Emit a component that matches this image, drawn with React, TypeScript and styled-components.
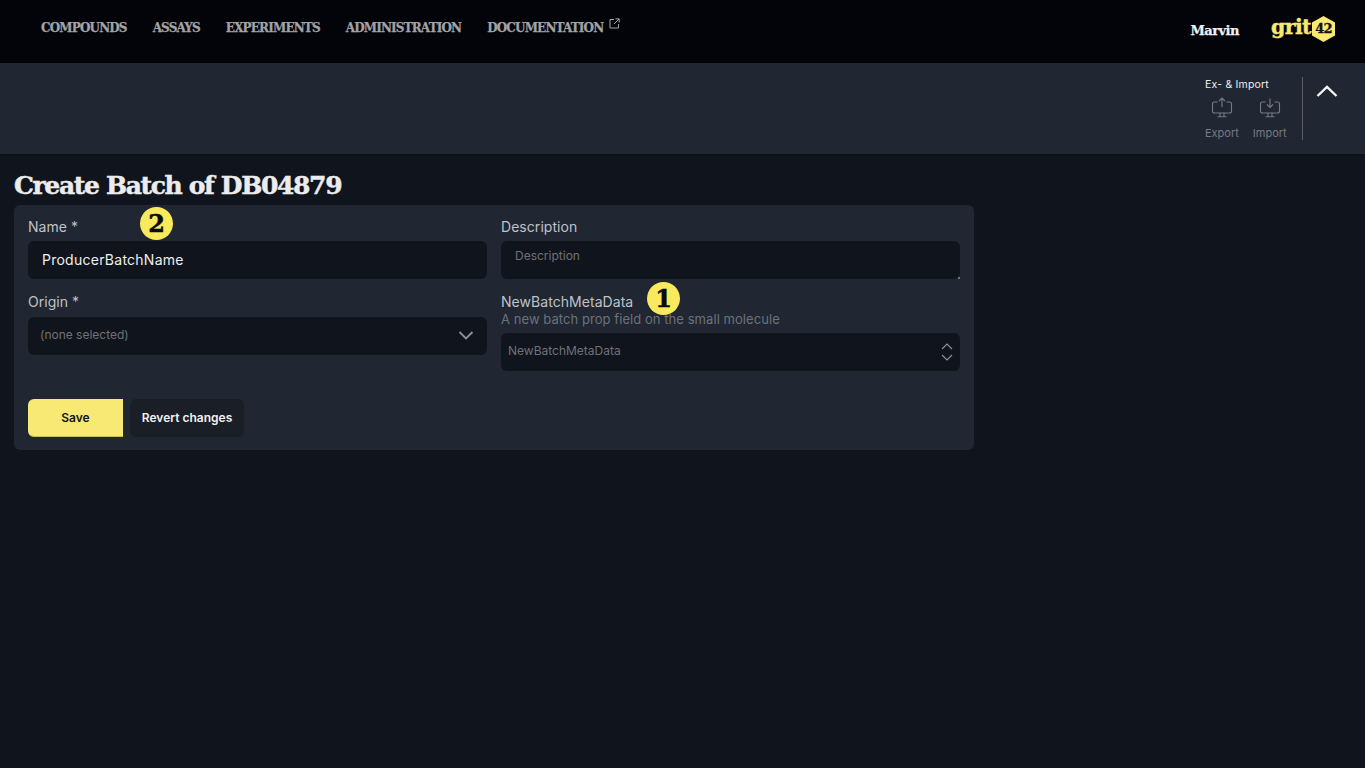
import React from "react";
import styled, { createGlobalStyle } from "styled-components";

const GlobalStyle = createGlobalStyle`
  html, body { margin: 0; padding: 0; background: #10141c; }
  body { font-family: "Inter", "Liberation Sans", sans-serif; }
  * { box-sizing: border-box; }
`;

const slab = `"DejaVu Serif", "Liberation Serif", serif`;

const Page = styled.div`
  min-height: 768px;
  background: #10141c;
`;

const TopBar = styled.header`
  height: 63px;
  background: #03040a;
  display: flex;
  align-items: center;
  justify-content: space-between;
  padding: 0 30px 8px 41px;
`;

const Nav = styled.nav`
  display: flex;
  gap: 26px;
  align-items: center;
`;

const NavItem = styled.a`
  position: relative;
  font-family: ${slab};
  font-weight: 700;
  font-size: 12px;
  letter-spacing: -0.85px;
  -webkit-text-stroke: 0.25px #a2a3a6;
  color: #a2a3a6;
  display: flex;
  align-items: flex-start;
  gap: 6px;
  svg { margin-top: -3px; }
`;

const UserArea = styled.div`
  display: flex;
  align-items: center;
  gap: 32px;
  margin-top: 6px;
`;

const UserName = styled.span`
  font-family: ${slab};
  font-weight: 700;
  font-size: 13px;
  letter-spacing: -0.5px;
  -webkit-text-stroke: 0.25px #f1f1f1;
  color: #f1f1f1;
`;

const Logo = styled.div`
  display: flex;
  align-items: center;
  gap: 1px;
  margin-top: -4px;
`;

const LogoWord = styled.span`
  font-family: ${slab};
  font-weight: 700;
  font-size: 20.5px;
  letter-spacing: -0.6px;
  -webkit-text-stroke: 0.4px #f8e971;
  color: #f8e971;
  line-height: 1;
  margin-top: -3px;
`;

const LogoHex = styled.div`
  position: relative;
  width: 23px;
  height: 26px;
  display: flex;
  align-items: center;
  justify-content: center;
  svg { position: absolute; inset: 0; }
`;

const LogoNum = styled.span`
  position: relative;
  font-family: ${slab};
  font-weight: 700;
  font-size: 13px;
  letter-spacing: -0.9px;
  -webkit-text-stroke: 0.3px #111;
  color: #111;
`;

const SubBar = styled.section`
  height: 91px;
  background: #202632;
  display: flex;
  justify-content: flex-end;
  padding: 14px 0;
  box-shadow: 0 1px 2px rgba(0, 0, 0, 0.25);
`;

const ToolGroup = styled.div`
  width: 98px;
  height: 63px;
  border-right: 1px solid #5a5e67;
  margin-right: 62px;
`;

const GroupTitle = styled.div`
  font-size: 10.5px;
  line-height: 15px;
  letter-spacing: 0.2px;
  color: #f0f0f0;
`;

const ToolRow = styled.div`
  display: flex;
  gap: 14px;
  margin-top: 4px;
`;

const ToolButton = styled.div`
  display: flex;
  flex-direction: column;
  align-items: center;
  gap: 8px;
  font-size: 11px;
  line-height: 14px;
  color: #777b83;
`;

const Collapse = styled.div`
  position: relative;
  svg { position: absolute; right: 27px; top: 7px; }
`;

const Main = styled.main`
  padding: 17px 14px 0;
`;

const Title = styled.h1`
  margin: 0;
  font-family: ${slab};
  font-weight: 700;
  font-size: 25px;
  line-height: 30px;
  letter-spacing: -1.35px;
  -webkit-text-stroke: 0.5px #ececec;
  color: #ececec;
`;

const Card = styled.form`
  width: 960px;
  height: 245px;
  margin-top: 4px;
  padding: 14px;
  background: #202632;
  border-radius: 6px;
`;

const Grid = styled.div`
  display: grid;
  grid-template-columns: 459px 459px;
  grid-template-rows: 75px 77px;
  column-gap: 14px;
`;

const Field = styled.div``;

const Label = styled.label<{ $height?: number }>`
  position: relative;
  display: block;
  height: ${(p) => p.$height ?? 22}px;
  font-size: 14px;
  line-height: 16px;
  letter-spacing: 0.05px;
  color: #bfc2c8;
`;

const Help = styled.div`
  font-size: 13px;
  line-height: 14px;
  letter-spacing: 0.06px;
  color: #6d717a;
  margin-top: -5px;
  margin-bottom: 7px;
`;

const Control = styled.div<{ $pad: number }>`
  height: 38px;
  background: #10141c;
  border-radius: 6px;
  padding: 0 ${(p) => p.$pad}px;
  display: flex;
  align-items: center;
  justify-content: space-between;
`;

const TextAreaWrap = styled.div`
  position: relative;
  height: 38px;
  &::after {
    content: "";
    position: absolute;
    right: 0;
    bottom: 0;
    width: 3px;
    height: 3px;
    background: linear-gradient(135deg, transparent 50%, #6d717a 50%);
  }
`;

const TextArea = styled.textarea`
  display: block;
  width: 100%;
  height: 38px;
  padding: 7px 14px;
  border: 0;
  outline: 0;
  resize: none;
  background: #10141c;
  border-radius: 6px;
  font: 12px / 15px "Inter", sans-serif;
  color: #eeeeee;
  &::placeholder { color: #6f7278; }
`;

const Value = styled.span`
  font-size: 14px;
  letter-spacing: 0.25px;
  margin-top: -1px;
  color: #eeeeee;
`;

const Placeholder = styled.span`
  font-size: 12px;
  margin-top: -3px;
  color: #6f7278;
`;

const Actions = styled.div`
  display: flex;
  gap: 7px;
  margin-top: 28px;
`;

const PrimaryButton = styled.button`
  width: 95px;
  height: 38px;
  border: 0;
  border-bottom: 1px solid #c9bd57;
  border-radius: 6px 0 0 6px;
  background: #f7e973;
  font: 600 12px "Inter", sans-serif;
  color: #14161b;
`;

const GhostButton = styled.button`
  width: 114px;
  height: 38px;
  border: 0;
  padding-bottom: 2px;
  border-radius: 6px;
  background: #191e27;
  font: 600 12px "Inter", sans-serif;
  color: #f1f1f1;
`;

const Marker = styled.span<{ $left: number; $top: number }>`
  position: absolute;
  left: ${(p) => p.$left}px;
  top: ${(p) => p.$top}px;
  width: 33px;
  height: 33px;
  border-radius: 50%;
  background: #f9e95c;
  color: #0a0a0a;
  font-family: ${slab};
  font-weight: 700;
  font-size: 24px;
  line-height: 33px;
  letter-spacing: 0;
  -webkit-text-stroke: 0.5px #0a0a0a;
  text-align: center;
`;

const ExternalIcon = () => (
  <svg width="11" height="11" viewBox="0 0 11 11" fill="none" stroke="#a2a3a6" strokeWidth="1">
    <path d="M5 1.5H1v8.5h8.5V6M6.5 .8h3.7v3.7M10 1 5 6" />
  </svg>
);

const MonitorIcon = ({ down }: { down?: boolean }) => (
  <svg width="22" height="22" viewBox="0 0 22 22" fill="none" stroke="#777b83" strokeWidth="1.1">
    <path d="M6.5 6H3.5a2 2 0 0 0-2 2v7a2 2 0 0 0 2 2h15a2 2 0 0 0 2-2V8a2 2 0 0 0-2-2H15.5" />
    <path d="M9 17v3.5M13 17v3.5M6.5 20.8h9" />
    {down ? <path d="M11 2.5v8.5M8 8.5l3 3 3-3" /> : <path d="M11 11V2.5M8 5l3-3 3 3" />}
  </svg>
);

export default function App() {
  return (
    <Page>
      <GlobalStyle />
      <TopBar>
        <Nav>
          <NavItem>COMPOUNDS</NavItem>
          <NavItem>ASSAYS</NavItem>
          <NavItem>EXPERIMENTS</NavItem>
          <NavItem>ADMINISTRATION</NavItem>
          <NavItem>
            DOCUMENTATION <ExternalIcon />
          </NavItem>
        </Nav>
        <UserArea>
          <UserName>Marvin</UserName>
          <Logo>
            <LogoWord>grit</LogoWord>
            <LogoHex>
              <svg width="23" height="26" viewBox="0 0 23 26">
                <path d="M11.5 0 23 6.5v13L11.5 26 0 19.5v-13z" fill="#f8e971" />
              </svg>
              <LogoNum>42</LogoNum>
            </LogoHex>
          </Logo>
        </UserArea>
      </TopBar>
      <SubBar>
        <ToolGroup>
          <GroupTitle>Ex- &amp; Import</GroupTitle>
          <ToolRow>
            <ToolButton>
              <MonitorIcon />
              Export
            </ToolButton>
            <ToolButton>
              <MonitorIcon down />
              Import
            </ToolButton>
          </ToolRow>
        </ToolGroup>
        <Collapse>
          <svg width="22" height="14" viewBox="0 0 22 14" fill="none" stroke="#f4f4f4" strokeWidth="2.4">
            <path d="M1.5 12 11 3l9.5 9" />
          </svg>
        </Collapse>
      </SubBar>
      <Main>
        <Title>Create Batch of DB04879</Title>
        <Card>
          <Grid>
            <Field>
              <Label>
                Name *
                <Marker $left={112} $top={-12}>2</Marker>
              </Label>
              <Control $pad={14}>
                <Value>ProducerBatchName</Value>
              </Control>
            </Field>
            <Field>
              <Label>Description</Label>
              <TextAreaWrap>
                <TextArea placeholder="Description" />
              </TextAreaWrap>
            </Field>
            <Field>
              <Label $height={23}>Origin *</Label>
              <Control $pad={12}>
                <Placeholder>(none selected)</Placeholder>
                <svg width="16" height="10" viewBox="0 0 16 10" fill="none" stroke="#8f9298" strokeWidth="1.8" style={{ marginRight: 1 }}>
                  <path d="M1.5 1 8 7.5 14.5 1" />
                </svg>
              </Control>
            </Field>
            <Field>
              <Label $height={23}>
                NewBatchMetaData
                <Marker $left={146} $top={-12}>1</Marker>
              </Label>
              <Help>A new batch prop field on the small molecule</Help>
              <Control $pad={7}>
                <Placeholder>NewBatchMetaData</Placeholder>
                <svg width="12" height="18" viewBox="0 0 12 18" fill="none" stroke="#8f9298" strokeWidth="1.1">
                  <path d="M1 6l5-5 5 5M1 12l5 5 5-5" />
                </svg>
              </Control>
            </Field>
          </Grid>
          <Actions>
            <PrimaryButton type="button">Save</PrimaryButton>
            <GhostButton type="button">Revert changes</GhostButton>
          </Actions>
        </Card>
      </Main>
    </Page>
  );
}
